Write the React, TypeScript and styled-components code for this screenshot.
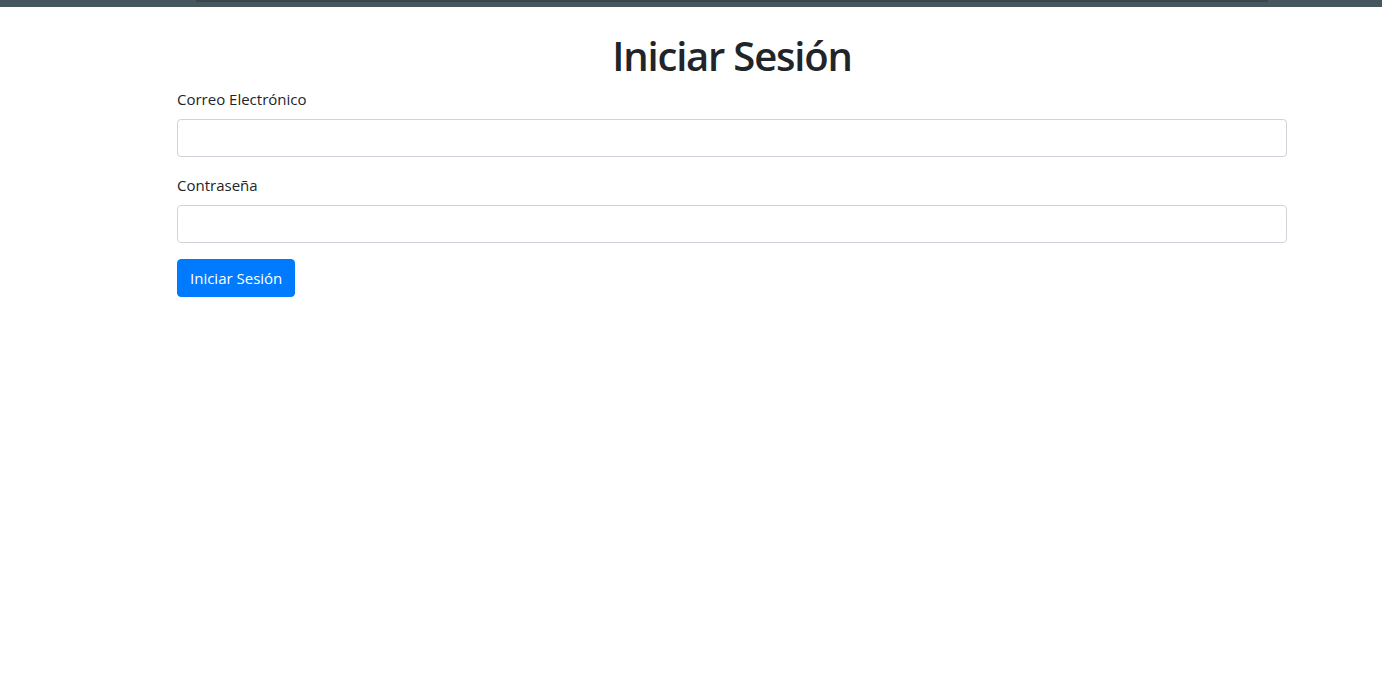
import React from "react";
import styled, { createGlobalStyle } from "styled-components";

const Global = createGlobalStyle`
  html, body { margin: 0; padding: 0; background: #fff; }
  body {
    font-family: "Open Sans", "Noto Sans", sans-serif;
    font-size: 16px;
    line-height: 1.5;
    color: #212529;
  }
  * { box-sizing: border-box; }
`;

const TopBar = styled.div`
  height: 7px;
  background: #46575f;
  display: flex;
  padding: 0 114px 0 196px;
`;

const TopShade = styled.div`
  flex: 1;
  height: 2px;
  background: #39474d;
`;

const Container = styled.main`
  width: 1110px;
  margin-left: 177px;
  padding-top: 25px;
`;

const Title = styled.h1`
  margin: 0 0 7px;
  font-size: 40px;
  font-weight: 600;
  line-height: 1.2;
  text-align: center;
  letter-spacing: -1.2px;
`;

const Group = styled.div`
  margin-bottom: 16px;
  display: flex;
  flex-direction: column;
`;

const Label = styled.label`
  display: block;
  margin-bottom: 8px;
  font-size: 15px;
  line-height: 24px;
  letter-spacing: 0;
`;

const Input = styled.input`
  display: block;
  width: 100%;
  height: 38px;
  padding: 6px 12px;
  font: inherit;
  color: #495057;
  background: #fff;
  border: 1px solid #ced4da;
  border-radius: 4px;
  outline: none;
`;

const Button = styled.button`
  display: inline-block;
  height: 38px;
  padding: 0 12px;
  font-family: inherit;
  font-size: 15px;
  line-height: 24px;
  letter-spacing: 0;
  color: #fff;
  background: #007bff;
  border: 1px solid #007bff;
  border-radius: 4px;
  cursor: pointer;
`;

export default function App() {
  return (
    <>
      <Global />
      <TopBar>
        <TopShade />
      </TopBar>
      <Container>
        <Title>Iniciar Sesión</Title>
        <form onSubmit={(e) => e.preventDefault()}>
          <Group>
            <Label htmlFor="email">Correo Electrónico</Label>
            <Input id="email" type="email" />
          </Group>
          <Group>
            <Label htmlFor="password">Contraseña</Label>
            <Input id="password" type="password" />
          </Group>
          <Button type="submit">Iniciar Sesión</Button>
        </form>
      </Container>
    </>
  );
}
